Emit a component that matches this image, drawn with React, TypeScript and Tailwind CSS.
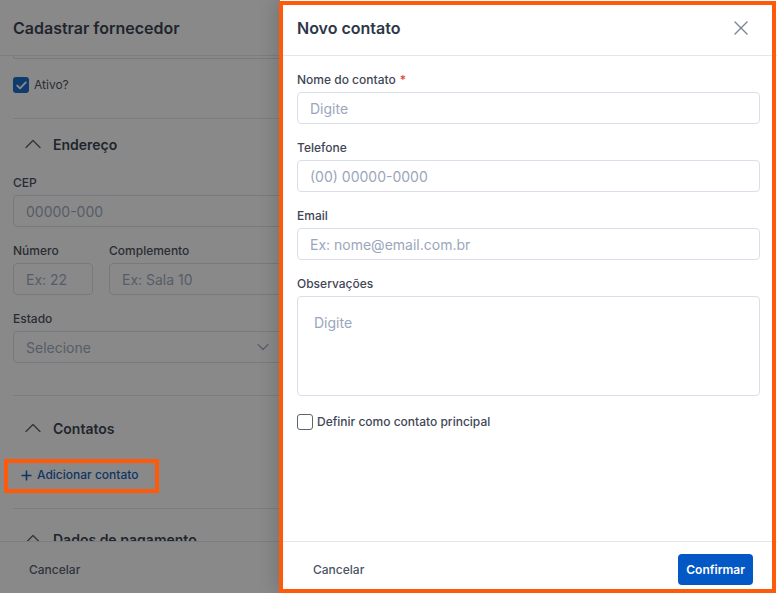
import React from "react";

function ChevronUp() {
  return (
    <svg width="16" height="10" viewBox="0 0 16 10" fill="none" className="shrink-0">
      <path d="M1 8.5 8 1.5l7 7" stroke="#4a5568" strokeWidth="1.3" strokeLinecap="round" strokeLinejoin="round" />
    </svg>
  );
}

function Field({ label, placeholder, required }: { label: string; placeholder: string; required?: boolean }) {
  return (
    <div className="flex flex-col gap-1">
      <label className="text-[12px] font-medium leading-4 text-[#3f4656]">
        {label}
        {required && <span className="ml-1 text-[#e53e3e]">*</span>}
      </label>
      <input
        readOnly
        placeholder={placeholder}
        className="h-8 w-full rounded-[4px] border border-[#d9dee8] bg-white px-3 text-[14px] text-[#2d3748] outline-none placeholder:text-[#9aa6bc]"
      />
    </div>
  );
}

function Section({ title }: { title: string }) {
  return (
    <div className="flex h-5 items-center">
      <div className="flex w-10 justify-center">
        <ChevronUp />
      </div>
      <span className="text-[14px] font-semibold text-[#2d3748]">{title}</span>
    </div>
  );
}

function SupplierPage() {
  return (
    <div className="flex h-full flex-col">
      <header className="flex h-[56px] shrink-0 items-center border-b border-[#e2e6ee] px-[13px]">
        <h1 className="text-[16px] font-semibold text-[#2d3748]">Cadastrar fornecedor</h1>
      </header>

      <main className="flex-1 overflow-hidden px-[13px]">
        <div className="h-[3px] rounded-b-[4px] border-x border-b border-[#d9dee8]" />

        <label className="mt-[18px] flex items-center gap-[5px] leading-4">
          <span className="flex h-4 w-4 items-center justify-center rounded-[3px] bg-[#0a63c9]">
            <svg width="11" height="9" viewBox="0 0 11 9" fill="none">
              <path d="M1.2 4.6 4 7.4 9.8 1.4" stroke="white" strokeWidth="1.9" strokeLinecap="round" strokeLinejoin="round" />
            </svg>
          </span>
          <span className="text-[12px] text-[#3f4656]">Ativo?</span>
        </label>

        <div className="mt-[25px] border-t border-[#e2e6ee]" />
        <div className="mt-[15px]">
          <Section title="Endereço" />
        </div>

        <div className="mt-[21px] w-[600px]">
          <Field label="CEP" placeholder="00000-000" />
        </div>

        <div className="mt-4 grid w-[600px] grid-cols-[80px_1fr] gap-4">
          <Field label="Número" placeholder="Ex: 22" />
          <Field label="Complemento" placeholder="Ex: Sala 10" />
        </div>

        <div className="mt-4 flex w-[269px] flex-col gap-1">
          <label className="text-[12px] font-medium leading-4 text-[#3f4656]">Estado</label>
          <div className="flex h-8 items-center justify-between rounded-[4px] border border-[#d9dee8] px-3">
            <span className="text-[14px] text-[#9aa6bc]">Selecione</span>
            <svg width="12" height="8" viewBox="0 0 12 8" fill="none">
              <path d="M1 1.5 6 6.5l5-5" stroke="#9aa6bc" strokeWidth="1.2" strokeLinecap="round" strokeLinejoin="round" />
            </svg>
          </div>
        </div>

        <div className="mt-8 border-t border-[#e2e6ee]" />
        <div className="mt-[22px]">
          <Section title="Contatos" />
        </div>

        <button className="mt-[23px] flex h-7 items-center gap-[5px] px-2 text-[12px] font-medium text-[#0a57b5]">
          <svg width="11" height="11" viewBox="0 0 11 11" fill="none">
            <path d="M5.5 0.5v10M0.5 5.5h10" stroke="#0a57b5" strokeWidth="1.6" />
          </svg>
          Adicionar contato
        </button>

        <div className="mt-[19px] border-t border-[#e2e6ee]" />
        <div className="mt-[20px]">
          <Section title="Dados de pagamento" />
        </div>
      </main>

      <footer className="flex h-[52px] shrink-0 items-center border-t border-[#e2e6ee] px-[13px] pt-1">
        <button className="px-4 text-[12px] font-medium text-[#4a5468]">Cancelar</button>
      </footer>
    </div>
  );
}

function ContactDrawer() {
  return (
    <aside className="absolute right-0 top-0 flex h-full w-[497px] flex-col bg-white shadow-[-6px_0_16px_rgba(0,0,0,0.12)]">
      <header className="flex h-[56px] shrink-0 items-center justify-between border-b border-[#e2e6ee] pl-[17px] pr-[29px]">
        <h2 className="text-[16px] font-semibold text-[#2d3748]">Novo contato</h2>
        <svg width="14" height="14" viewBox="0 0 14 14" fill="none">
          <path d="M1 1l12 12M13 1 1 13" stroke="#7b8494" strokeWidth="1.4" strokeLinecap="round" />
        </svg>
      </header>

      <div className="flex flex-1 flex-col gap-4 px-[17px] pt-4">
        <Field label="Nome do contato" placeholder="Digite" required />
        <Field label="Telefone" placeholder="(00) 00000-0000" />
        <Field label="Email" placeholder="Ex: nome@email.com.br" />
        <div className="flex flex-col gap-1">
          <label className="text-[12px] font-medium leading-4 text-[#3f4656]">Observações</label>
          <textarea
            readOnly
            placeholder="Digite"
            className="h-[100px] resize-none rounded-[4px] border border-[#d9dee8] px-4 py-4 text-[14px] leading-5 outline-none placeholder:text-[#9aa6bc]"
          />
        </div>
        <label className="mt-px flex items-center gap-1">
          <span className="h-4 w-4 rounded-[3px] border border-[#5c6470] bg-white" />
          <span className="text-[12px] font-medium text-[#3f4656]">Definir como contato principal</span>
        </label>
      </div>

      <footer className="flex h-[52px] shrink-0 items-center justify-between border-t border-[#e2e6ee] pl-[17px] pr-[24px] pt-1">
        <button className="px-4 text-[12px] font-medium text-[#4a5468]">Cancelar</button>
        <button className="h-[31px] rounded-[4px] bg-[#0358c6] px-[8px] text-[12px] font-semibold text-white">
          Confirmar
        </button>
      </footer>
    </aside>
  );
}

export default function App() {
  return (
    <div className="relative h-[593px] w-[777px] overflow-hidden bg-white font-['Inter',sans-serif]">
      <SupplierPage />
      <div className="absolute inset-0 bg-[#141414]/50" />
      <ContactDrawer />
      {/* annotation highlights */}
      <div className="pointer-events-none absolute left-[279px] top-px h-[592px] w-[497px] border-4 border-[#ff5a0a]" />
      <div className="pointer-events-none absolute left-[4px] top-[459px] h-[34px] w-[155px] border-4 border-[#ff5a0a]" />
    </div>
  );
}
